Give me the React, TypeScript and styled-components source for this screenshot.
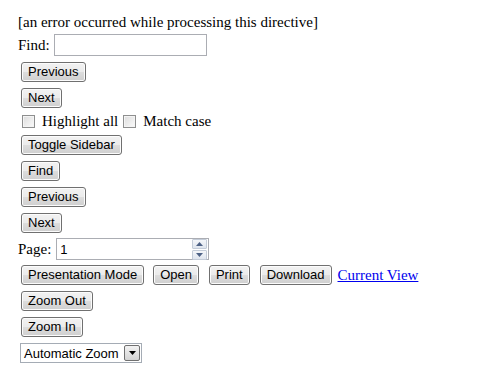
import React from "react";
import styled, { createGlobalStyle } from "styled-components";

const Global = createGlobalStyle`
  html, body { background: #ffffff; }
  body { margin: 8px; font-family: "Liberation Serif", "Times New Roman", serif; font-size: 15px; color: #000; }
`;

const Page = styled.div`
  display: flex;
  flex-direction: column;
  align-items: flex-start;
  padding: 5px 0 0 10px;
`;

const Line = styled.div`
  font-family: "Liberation Serif", serif;
  font-size: 15px;
  line-height: 18px;
  height: 18px;
`;

const Row = styled.div<{ $h?: number }>`
  display: flex;
  align-items: center;
  height: ${(p) => p.$h ?? 26}px;
`;

const Label = styled.span<{ $mr?: number }>`
  font-family: "Liberation Serif", serif;
  font-size: 15px;
  margin-right: ${(p) => p.$mr ?? 4}px;
`;

const Button = styled.button<{ $ml?: number }>`
  font-family: "Liberation Sans", Arial, sans-serif;
  font-size: 13px;
  height: 20px;
  padding: 0 6px;
  margin: 0 0 0 ${(p) => p.$ml ?? 3}px;
  border: 1px solid #707070;
  border-radius: 3px;
  background: linear-gradient(#f2f2f2 0%, #ebebeb 50%, #dddddd 51%, #cfcfcf 100%);
  color: #000;
  line-height: 18px;
  white-space: nowrap;
  box-shadow: inset 0 0 0 1px #fcfcfc;
`;

const TextInput = styled.input`
  box-sizing: border-box;
  width: 153px;
  height: 22px;
  border: 1px solid #abadb3;
  margin: 0;
  padding: 0 3px;
  font-family: "Liberation Sans", Arial, sans-serif;
  font-size: 13px;
  outline: none;
`;

const NumberBox = styled.div`
  box-sizing: border-box;
  width: 153px;
  height: 22px;
  border: 1px solid #abadb3;
  display: flex;
  align-items: center;
  justify-content: space-between;
  padding: 0 1px 0 3px;
  font-family: "Liberation Sans", Arial, sans-serif;
  font-size: 13px;
`;

const Spinner = styled.div`
  display: flex;
  flex-direction: column;
  gap: 1px;
  width: 15px;
`;

const SpinBtn = styled.div`
  height: 8px;
  border: 1px solid #c4ccd8;
  border-radius: 1px;
  background: linear-gradient(#f4f6f9, #dfe5ee);
  display: flex;
  align-items: center;
  justify-content: center;
`;

const Check = styled.span<{ $ml?: number }>`
  box-sizing: border-box;
  display: inline-block;
  width: 13px;
  height: 13px;
  border: 1px solid #8e8f8f;
  background: linear-gradient(135deg, #dcdcdc, #fbfbfb);
  box-shadow: inset 0 0 0 1px #f4f4f4;
  margin: 0 7px 0 ${(p) => p.$ml ?? 4}px;
`;

const Link = styled.a`
  font-family: "Liberation Serif", serif;
  font-size: 15px;
  color: #0000ee;
  text-decoration: underline;
  margin-left: 6px;
`;

const Select = styled.div`
  box-sizing: border-box;
  margin-left: 2px;
  width: 122px;
  height: 20px;
  border: 1px solid #a5acb5;
  display: flex;
  align-items: center;
  justify-content: space-between;
  padding: 0 1px 0 3px;
  font-family: "Liberation Sans", Arial, sans-serif;
  font-size: 13px;
`;

const DropBtn = styled.div`
  box-sizing: border-box;
  width: 16px;
  height: 16px;
  border: 1px solid #707070;
  border-radius: 2px;
  background: linear-gradient(#f2f2f2, #d4d4d4);
  display: flex;
  align-items: center;
  justify-content: center;
`;

const Tri = ({ up, color = "#000" }: { up?: boolean; color?: string }) => (
  <svg width="7" height="4" viewBox="0 0 7 4">
    <polygon points={up ? "0,4 7,4 3.5,0" : "0,0 7,0 3.5,4"} fill={color} />
  </svg>
);

export default function App() {
  return (
    <>
      <Global />
      <Page>
        <Line>[an error occurred while processing this directive]</Line>
        <Row $h={28}>
          <Label>Find:</Label>
          <TextInput />
        </Row>
        <Row><Button>Previous</Button></Row>
        <Row><Button>Next</Button></Row>
        <Row $h={21}>
          <Check />
          <Label $mr={0}>Highlight all</Label>
          <Check $ml={5} />
          <Label $mr={0}>Match case</Label>
        </Row>
        <Row><Button>Toggle Sidebar</Button></Row>
        <Row><Button>Find</Button></Row>
        <Row><Button>Previous</Button></Row>
        <Row><Button>Next</Button></Row>
        <Row>
          <Label $mr={5}>Page:</Label>
          <NumberBox>
            <span>1</span>
            <Spinner>
              <SpinBtn><Tri up color="#4d6185" /></SpinBtn>
              <SpinBtn><Tri color="#4d6185" /></SpinBtn>
            </Spinner>
          </NumberBox>
        </Row>
        <Row>
          <Button>Presentation Mode</Button>
          <Button $ml={9}>Open</Button>
          <Button $ml={10}>Print</Button>
          <Button $ml={10}>Download</Button>
          <Link href="#">Current View</Link>
        </Row>
        <Row><Button>Zoom Out</Button></Row>
        <Row><Button>Zoom In</Button></Row>
        <Row>
          <Select>
            <span>Automatic Zoom</span>
            <DropBtn><Tri /></DropBtn>
          </Select>
        </Row>
      </Page>
    </>
  );
}
